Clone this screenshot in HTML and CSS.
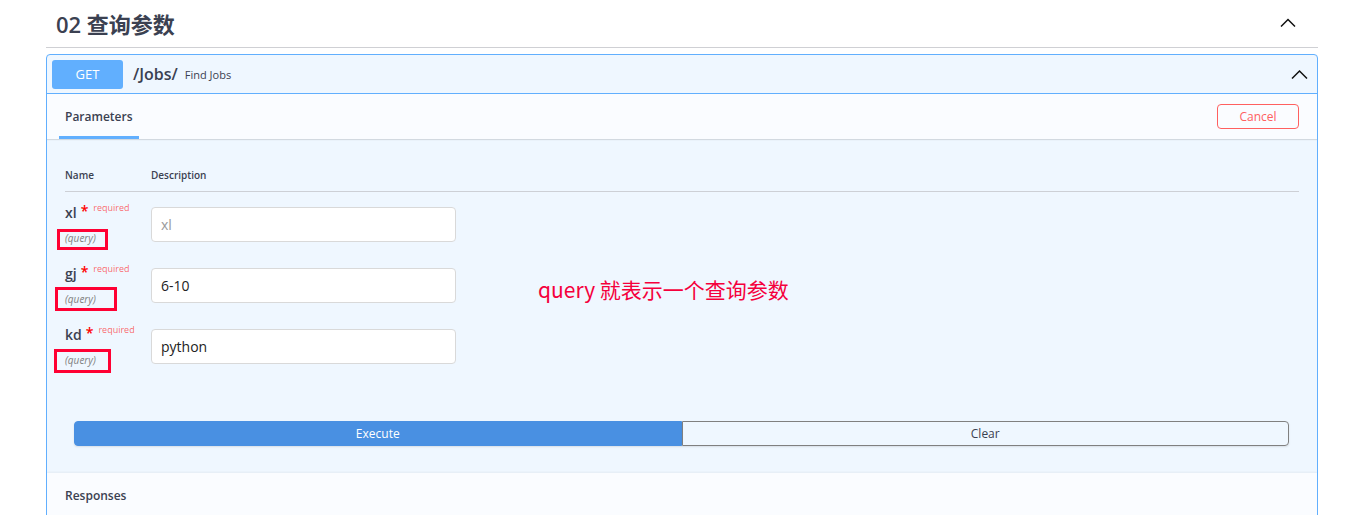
FILE: index.html
```html
<!DOCTYPE html>
<html lang="zh">
<head>
<meta charset="utf-8">
<title>02 查询参数</title>
<link rel="stylesheet" href="styles.css">
</head>
<body>
<div class="wrap">
  <div class="tag-head">
    <h3 class="tag-title">02 查询参数</h3>
    <svg class="chev" width="16" height="9" viewBox="0 0 16 9"><polyline points="1,8.5 8,1.5 15,8.5" fill="none" stroke="#111" stroke-width="1.5"/></svg>
  </div>

  <div class="opblock">
    <div class="summary">
      <span class="method">GET</span>
      <span class="path">/Jobs/</span>
      <span class="desc">Find Jobs</span>
      <svg class="chev summary-chev" width="17" height="10" viewBox="0 0 17 10"><polyline points="1,9.5 8.5,2 16,9.5" fill="none" stroke="#111" stroke-width="1.5"/></svg>
    </div>

    <div class="tab-head">
      <div class="tab">Parameters</div>
      <button class="cancel">Cancel</button>
    </div>

    <div class="params">
      <div class="thead">
        <div>Name</div>
        <div>Description</div>
      </div>

      <div class="prow">
        <div class="pname">
          <div class="pn">xl<span class="star">*</span><span class="req">required</span></div>
          <div class="pin">(query)</div>
        </div>
        <div><input class="inp" type="text" placeholder="xl"></div>
      </div>
      <div class="prow">
        <div class="pname">
          <div class="pn">gj<span class="star">*</span><span class="req">required</span></div>
          <div class="pin">(query)</div>
        </div>
        <div><input class="inp" type="text" value="6-10"></div>
      </div>
      <div class="prow">
        <div class="pname">
          <div class="pn">kd<span class="star">*</span><span class="req">required</span></div>
          <div class="pin">(query)</div>
        </div>
        <div><input class="inp" type="text" value="python"></div>
      </div>

      <div class="exec-wrap">
        <button class="btn execute">Execute</button>
        <button class="btn clear">Clear</button>
      </div>

      <div class="mark mark-1"></div>
      <div class="mark mark-2"></div>
      <div class="mark mark-3"></div>
      <div class="note">query 就表示一个查询参数</div>
    </div>

    <div class="responses">
      <h4 class="resp-title">Responses</h4>
    </div>
  </div>
</div>
</body>
</html>
```

FILE: styles.css
```css
* { box-sizing: border-box; }
html, body { margin: 0; padding: 0; background: #fff; }
body {
  font-family: "Open Sans", "Noto Sans CJK SC", sans-serif;
  color: #3b4151;
  height: 515px;
  overflow: hidden;
}
.wrap {
  margin: 0 48px 0 46px;
}
.tag-head {
  height: 48px;
  display: flex;
  align-items: center;
  justify-content: space-between;
  padding: 0 22px 2px 10px;
  border-bottom: 1px solid #cfd0d4;
}
.tag-title {
  margin: 0;
  font-size: 22px;
  font-weight: 600;
  font-family: "Open Sans", "Noto Sans CJK SC", sans-serif;
  color: #3b4151;
}
.chev { display: block; }
.opblock {
  margin-top: 6px;
  border: 1px solid #61affe;
  border-radius: 4px;
  background: #eff7ff;
  overflow: hidden;
}
.summary {
  height: 39px;
  display: flex;
  align-items: center;
  padding: 0 9px 0 5px;
  border-bottom: 1px solid #61affe;
}
.method {
  width: 71px;
  height: 29px;
  display: flex;
  align-items: center;
  justify-content: center;
  background: #61affe;
  color: #fff;
  border-radius: 3px;
  font-size: 13px;
  font-weight: 500;
}
.path {
  margin-left: 10px;
  font-size: 16px;
  font-weight: 600;
  color: #3b4151;
  margin-top: -1px;
}
.desc {
  margin-left: 7px;
  font-size: 11px;
  color: #3b4151;
}
.summary-chev { margin-left: auto; }
.tab-head {
  height: 45px;
  display: flex;
  align-items: stretch;
  justify-content: space-between;
  padding: 0 18px 0 12px;
  background: #fafcff;
  box-shadow: 0 1px 1px rgba(0,0,0,.12);
}
.tab {
  padding: 0 6px;
  display: flex;
  align-items: center;
  font-size: 12px;
  font-weight: 600;
  border-bottom: 3px solid #61affe;
  padding-top: 3px;
}
.cancel {
  align-self: center;
  margin-top: 0;
  width: 82px;
  height: 25px;
  border: 1px solid #ff6060;
  border-radius: 4px;
  background: transparent;
  color: #ff6060;
  font-family: "Open Sans", sans-serif;
  font-size: 12px;
  font-weight: 500;
}
.params {
  position: relative;
  padding: 28px 18px 27px 18px;
}
.thead {
  display: grid;
  grid-template-columns: 86px 1fr;
  font-size: 10px;
  font-weight: 600;
  line-height: 16px;
  padding-bottom: 8px;
  border-bottom: 1px solid #cdd0d6;
}
.prow {
  display: grid;
  grid-template-columns: 86px 1fr;
  height: 61px;
  padding-top: 15px;
}
.pname { margin-top: -9px; }
.pn {
  font-size: 14px;
  font-weight: 600;
  line-height: 20px;
  color: #3b4151;
}
.star {
  color: #f00;
  font-size: 14px;
  margin-left: 4px;
  vertical-align: 2px;
}
.req {
  color: rgba(255,0,0,.6);
  font-size: 9px;
  font-weight: 400;
  margin-left: 5px;
  vertical-align: 7px;
}
.pin {
  margin-top: 8px;
  font-size: 10px;
  font-style: italic;
  color: #808080;
  line-height: 14px;
}
.inp {
  width: 305px;
  height: 35px;
  border: 1px solid #d9d9d9;
  border-radius: 4px;
  background: #fff;
  padding: 0 9px;
  font-family: "Open Sans", sans-serif;
  font-size: 14px;
  font-weight: 500;
  color: #222;
  outline: none;
}
.inp::placeholder { color: #9a9a9a; font-weight: 400; }
.exec-wrap {
  display: flex;
  margin: 46px 10px 0 9px;
}
.btn {
  flex: 1 1 50%;
  height: 25px;
  font-family: "Open Sans", sans-serif;
  font-size: 12px;
  font-weight: 400;
  box-shadow: 0 1px 2px rgba(0,0,0,.1);
}
.execute {
  background: #4990e2;
  color: #fff;
  border: 1px solid #4990e2;
  border-radius: 4px 0 0 4px;
}
.clear {
  background: transparent;
  color: #3b4151;
  border: 1px solid #808080;
  border-radius: 0 4px 4px 0;
}
.mark {
  position: absolute;
  border: 3px solid #ff0033;
}
.mark-1 { left: 10px; top: 90px; width: 51px; height: 21px; }
.mark-2 { left: 8px; top: 148px; width: 62px; height: 24px; }
.mark-3 { left: 7px; top: 210px; width: 57px; height: 24px; }
.note {
  position: absolute;
  left: 491px;
  top: 135px;
  font-family: "Noto Sans CJK SC", sans-serif;
  font-size: 21px;
  color: #f5003c;
  white-space: nowrap;
}
.responses {
  background: #fafcff;
  padding: 14px 18px 20px;
  box-shadow: 0 -1px 2px rgba(0,0,0,.05);
}
.resp-title {
  margin: 0;
  font-size: 12px;
  font-weight: 600;
  line-height: 18px;
}
```
